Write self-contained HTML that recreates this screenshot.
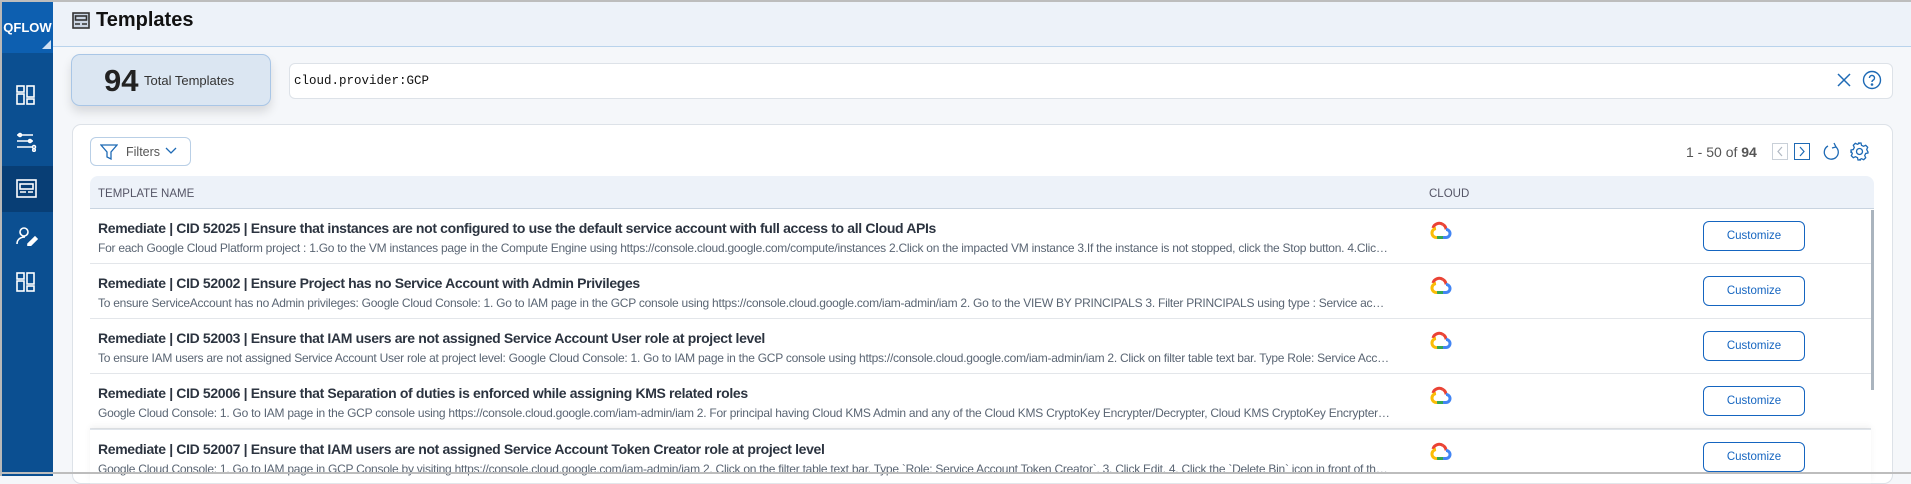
<!DOCTYPE html>
<html><head><meta charset="utf-8"><style>
*{box-sizing:border-box;margin:0;padding:0}
body{width:1911px;height:474px;overflow:hidden;background:#f5f7fa;font-family:"Liberation Sans",sans-serif;position:relative;border-top:2px solid #bdbdbd}
.abs{position:absolute}
#side{left:0;top:0;width:53px;height:474px;background:#0b4f91;border-left:2px solid #b8b8b8}
#logo{left:0;top:0;width:51px;height:51px;background:#0d5fb0;color:#fff;font-weight:bold;font-size:13px;display:flex;align-items:center;justify-content:center}
#hdr{left:53px;top:0;right:0;height:45px;background:#edf2f9;border-bottom:1px solid #b9d3ec}
.title{left:96px;top:7px;font-size:20px;font-weight:bold;color:#111}
.row{position:absolute;left:90px;width:1781px;height:55px;border-bottom:1px solid #e3e6ea;background:#fff}
.t{position:absolute;left:8px;top:11px;font-size:14px;font-weight:bold;color:#2c3440;letter-spacing:-0.35px;white-space:nowrap}
.d{position:absolute;left:8px;top:32px;width:1292px;font-size:12px;color:#5a6573;letter-spacing:-0.25px;white-space:nowrap;overflow:hidden;text-overflow:ellipsis}
.btn{position:absolute;left:1613px;top:12px;width:102px;height:30px;border:1.5px solid #1565c0;border-radius:6px;color:#1565c0;font-size:11.5px;display:flex;align-items:center;justify-content:center}
.gc{position:absolute;left:1340px;top:10px}
</style></head><body>
<div id="side" class="abs">
 <div id="logo" class="abs">QFLOW</div>
 <div class="abs" style="left:40px;top:38px;width:0;height:0;border-left:9px solid transparent;border-bottom:9px solid #cfe0f3"></div>
 <div class="abs" style="left:0;top:164px;width:51px;height:46px;background:#083e75"></div>
 <svg class="abs" style="left:14px;top:83px" width="20" height="20" fill="none" stroke="#fff" stroke-width="1.6"><rect x="1" y="1" width="7" height="6"/><rect x="1" y="9" width="7" height="10"/><rect x="11" y="1" width="7" height="11"/><rect x="11" y="14" width="7" height="5"/></svg>
 <svg class="abs" style="left:14px;top:130px" width="22" height="20" fill="none" stroke="#fff" stroke-width="1.5"><path d="M1 3h16M1 9h16M1 15h16"/><circle cx="4" cy="3" r="1.5"/><circle cx="14" cy="9" r="1.5"/><circle cx="18" cy="15" r="1.5"/><circle cx="18" cy="18" r="1.3"/></svg>
 <svg class="abs" style="left:14px;top:177px" width="22" height="20" fill="none" stroke="#fff" stroke-width="1.6"><rect x="1" y="1" width="19" height="17"/><rect x="4" y="5" width="13" height="5"/><path d="M4 13h6M12 13h5"/></svg>
 <svg class="abs" style="left:14px;top:224px" width="22" height="20" fill="none" stroke="#fff" stroke-width="1.6"><circle cx="8" cy="6" r="4"/><path d="M1 18c0-5 4-7 8-7"/><path d="M12 18l7-7 2 2-7 7h-2z" fill="#fff"/></svg>
 <svg class="abs" style="left:14px;top:270px" width="20" height="20" fill="none" stroke="#fff" stroke-width="1.6"><rect x="1" y="1" width="7" height="6"/><rect x="1" y="9" width="7" height="10"/><rect x="11" y="1" width="7" height="11"/><rect x="11" y="14" width="7" height="5"/></svg>
</div>
<div id="hdr" class="abs"></div>
<svg class="abs" style="left:72px;top:10px" width="18" height="17" fill="none" stroke="#333" stroke-width="1.6"><rect x="1" y="1" width="16" height="15" fill="#7d93ae" fill-opacity=".3"/><rect x="3.5" y="4" width="11" height="4"/><path d="M3 12h5M10 12h5"/></svg>
<div class="abs title">Templates</div>
<div class="abs" style="left:71px;top:52px;width:200px;height:52px;background:#dbe6f2;border:1px solid #a9c6e6;border-radius:9px;box-shadow:0 6px 10px rgba(0,0,0,.12)"></div>
<div class="abs" style="left:104px;top:61px;font-size:31px;font-weight:bold;color:#222">94</div>
<div class="abs" style="left:144px;top:71px;font-size:13px;color:#333">Total Templates</div>
<div class="abs" style="left:289px;top:61px;width:1604px;height:36px;background:#fff;border:1px solid #dde2e8;border-radius:6px"></div>
<div class="abs" style="left:294px;top:72px;font-family:'Liberation Mono',monospace;font-size:12.5px;color:#111">cloud.provider:GCP</div>
<svg class="abs" style="left:1836px;top:70px" width="16" height="16" stroke="#1e6ab5" stroke-width="1.5"><path d="M2 2l12 12M14 2L2 14"/></svg>
<svg class="abs" style="left:1862px;top:68px" width="20" height="20" fill="none" stroke="#1e6ab5" stroke-width="1.4"><circle cx="10" cy="10" r="8.5"/><path d="M7.5 8a2.5 2.5 0 1 1 3.5 2.2c-.8.4-1 1-1 1.8"/><circle cx="10" cy="14.5" r=".6" fill="#1e6ab5"/></svg>
<div class="abs" style="left:72px;top:122px;width:1821px;height:360px;background:#fff;border:1px solid #dde2e8;border-radius:9px"></div>
<div class="abs" style="left:90px;top:135px;width:101px;height:29px;border:1px solid #b9cfe6;border-radius:6px"></div>
<svg class="abs" style="left:100px;top:142px" width="18" height="16" fill="none" stroke="#1e6ab5" stroke-width="1.3"><path d="M1 1h16l-6 7v7l-4-2V8z"/></svg>
<div class="abs" style="left:126px;top:143px;font-size:12.5px;color:#555">Filters</div>
<svg class="abs" style="left:165px;top:145px" width="12" height="8" fill="none" stroke="#1e6ab5" stroke-width="1.3"><path d="M1 1l5 5 5-5"/></svg>
<div class="abs" style="left:1686px;top:142px;font-size:14px;color:#555">1 - 50 of <b>94</b></div>
<div class="abs" style="left:1772px;top:141px;width:16px;height:17px;border:1px solid #c9d0d8"></div>
<svg class="abs" style="left:1776px;top:144px" width="8" height="11" fill="none" stroke="#b0b8c2" stroke-width="1.2"><path d="M6 1L2 5.5 6 10"/></svg>
<div class="abs" style="left:1794px;top:141px;width:16px;height:17px;border:1.3px solid #1e6ab5"></div>
<svg class="abs" style="left:1798px;top:144px" width="8" height="11" fill="none" stroke="#1e6ab5" stroke-width="1.2"><path d="M2 1l4 4.5L2 10"/></svg>
<svg class="abs" style="left:1823px;top:140px" width="18" height="20" fill="none" stroke="#1e6ab5" stroke-width="1.3"><path d="M13 5a7 7 0 1 1-8-1"/><path d="M11 1l2 4-4 1"/></svg>
<svg class="abs" style="left:1850px;top:140px" width="19" height="19" fill="none" stroke="#1e6ab5" stroke-width="1.3"><circle cx="9.5" cy="9.5" r="3"/><path d="M8 1h3l.5 2.3 2 1 2.2-1 2 2-1 2.2 1 2L18 10v1l-2.3.5-1 2 1 2.2-2 2-2.2-1-2 1L11 18H8l-.5-2.3-2-1-2.2 1-2-2 1-2.2-1-2L1 11V8l2.3-.5 1-2-1-2.2 2-2 2.2 1 2-1z"/></svg>
<div class="abs" style="left:90px;top:174px;width:1784px;height:33px;background:#edf2f9;border-bottom:1px solid #c9d4e0;border-radius:8px 8px 0 0"></div>
<div class="abs" style="left:98px;top:186px;font-size:11.5px;color:#556">TEMPLATE NAME</div>
<div class="abs" style="left:1429px;top:186px;font-size:11.5px;color:#556">CLOUD</div>
<svg width="0" height="0" style="position:absolute"><defs><g id="g"><path d="M13 5.5A6.5 6.5 0 0 0 3 9" stroke="#ea4335" stroke-width="3" fill="none"/><path d="M13 5.5a6 6 0 0 1 3 5" stroke="#ea4335" stroke-width="3" fill="none"/><path d="M16 10.5a4 4 0 0 1 0 8h-3" stroke="#4285f4" stroke-width="3" fill="none"/><path d="M13 18.5H7" stroke="#34a853" stroke-width="3"/><path d="M7 18.5a4.5 4.5 0 0 1-1-9" stroke="#fbbc05" stroke-width="3" fill="none"/></g></defs></svg>
<div class="row" style="top:207px"><div class="t">Remediate | CID 52025 | Ensure that instances are not configured to use the default service account with full access to all Cloud APIs</div><div class="d">For each Google Cloud Platform project : 1.Go to the VM instances page in the Compute Engine using https://console.cloud.google.com/compute/instances 2.Click on the impacted VM instance 3.If the instance is not stopped, click the Stop button. 4.Click Edit</div><svg class="gc" width="22" height="21"><use href="#g"/></svg><div class="btn">Customize</div></div>
<div class="row" style="top:262px"><div class="t">Remediate | CID 52002 | Ensure Project has no Service Account with Admin Privileges</div><div class="d">To ensure ServiceAccount has no Admin privileges: Google Cloud Console: 1. Go to IAM page in the GCP console using https://console.cloud.google.com/iam-admin/iam 2. Go to the VIEW BY PRINCIPALS 3. Filter PRINCIPALS using type : Service account</div><svg class="gc" width="22" height="21"><use href="#g"/></svg><div class="btn">Customize</div></div>
<div class="row" style="top:317px"><div class="t">Remediate | CID 52003 | Ensure that IAM users are not assigned Service Account User role at project level</div><div class="d">To ensure IAM users are not assigned Service Account User role at project level: Google Cloud Console: 1. Go to IAM page in the GCP console using https://console.cloud.google.com/iam-admin/iam 2. Click on filter table text bar. Type Role: Service Account User</div><svg class="gc" width="22" height="21"><use href="#g"/></svg><div class="btn">Customize</div></div>
<div class="row" style="top:372px"><div class="t">Remediate | CID 52006 | Ensure that Separation of duties is enforced while assigning KMS related roles</div><div class="d">Google Cloud Console: 1. Go to IAM page in the GCP console using https://console.cloud.google.com/iam-admin/iam 2. For principal having Cloud KMS Admin and any of the Cloud KMS CryptoKey Encrypter/Decrypter, Cloud KMS CryptoKey Encrypter roles</div><svg class="gc" width="22" height="21"><use href="#g"/></svg><div class="btn">Customize</div></div>
<div class="row" style="top:427px;border-top:1px solid #dfe4ea;box-shadow:0 -3px 6px rgba(0,0,0,.05)"><div class="t">Remediate | CID 52007 | Ensure that IAM users are not assigned Service Account Token Creator role at project level</div><div class="d">Google Cloud Console: 1. Go to IAM page in GCP Console by visiting https://console.cloud.google.com/iam-admin/iam 2. Click on the filter table text bar. Type `Role: Service Account Token Creator`. 3. Click Edit. 4. Click the `Delete Bin` icon in front of the role</div><svg class="gc" width="22" height="21"><use href="#g"/></svg><div class="btn">Customize</div></div>
<div class="abs" style="left:1871px;top:208px;width:3px;height:180px;background:#aab4be"></div>
<div class="abs" style="left:0;top:470px;width:1911px;height:2px;background:#bdbdbd"></div>
</body></html>
